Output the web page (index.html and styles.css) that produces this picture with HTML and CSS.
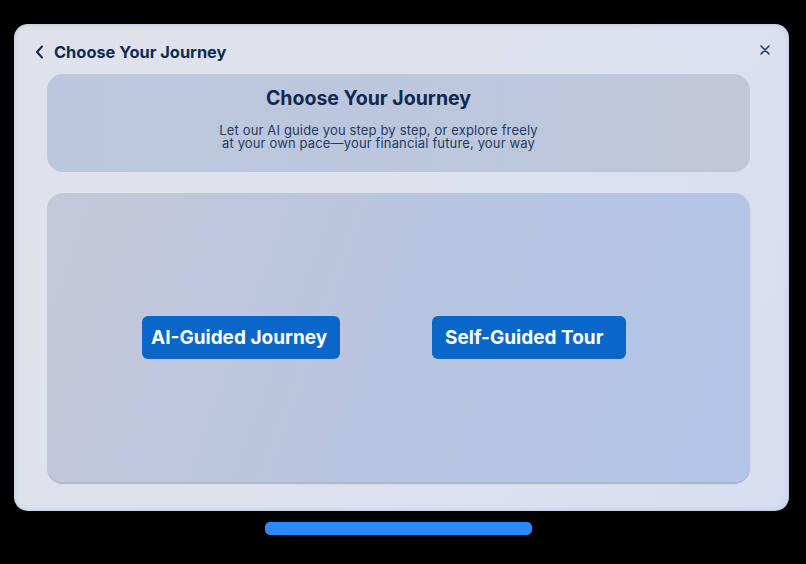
FILE: index.html
```html
<!DOCTYPE html>
<html lang="en">
<head>
<meta charset="utf-8">
<title>Choose Your Journey</title>
<link rel="stylesheet" href="styles.css">
</head>
<body>
<div class="stage">
  <div class="panel">
    <header class="topbar">
      <button class="back" aria-label="Back">
        <svg width="9" height="14" viewBox="0 0 9 14"><path d="M7 1.5 L2 7 L7 12.5" fill="none" stroke="#10294f" stroke-width="2" stroke-linecap="round" stroke-linejoin="round"/></svg>
      </button>
      <h1 class="topbar-title">Choose Your Journey</h1>
      <button class="close" aria-label="Close">
        <svg width="10" height="10" viewBox="0 0 10 10"><path d="M1 1 L9 9 M9 1 L1 9" fill="none" stroke="#1d3356" stroke-width="1.5" stroke-linecap="round"/></svg>
      </button>
    </header>
    <section class="intro">
      <h2 class="intro-title">Choose Your Journey</h2>
      <p class="intro-text">Let our AI guide you step by step, or explore freely<br>at your own pace—your financial future, your way</p>
    </section>
    <section class="choices">
      <button class="choice choice-ai">AI-Guided Journey</button>
      <button class="choice choice-self">Self-Guided Tour</button>
    </section>
  </div>
  <div class="home-bar"></div>
</div>
</body>
</html>
```

FILE: styles.css
```css
* { box-sizing: border-box; }
html, body { margin: 0; padding: 0; background: #000; }
body { font-family: Inter, "Noto Sans", "Liberation Sans", sans-serif; width: 806px; height: 564px; overflow: hidden; }

.stage { padding: 24px 0 0 14px; }

.panel {
  width: 775px;
  height: 487px;
  border-radius: 14px;
  background: linear-gradient(120deg, #dfe2ea 0%, #dde2ee 50%, #d6def1 100%);
  box-shadow: inset 0 0 5px rgba(110, 140, 215, 0.35);
  display: flex;
  flex-direction: column;
  overflow: hidden;
}

.topbar {
  height: 50px;
  padding: 6px 19px 0 21px;
  display: flex;
  align-items: center;
}
.back, .close {
  border: 0; background: none; padding: 0; margin: 0;
  display: flex; align-items: center; cursor: pointer;
}
.back { width: 9px; margin-right: 10px; }
.topbar-title {
  margin: 0;
  font-size: 16.4px;
  font-weight: 700;
  color: #0f2a52;
  flex: 1;
}
.close { width: 10px; margin-top: -5px; }

.intro {
  margin: 0 39px 0 33px;
  height: 98px;
  border-radius: 16px;
  background: linear-gradient(90deg, #bdc7dc 0%, #bcc7de 50%, #c0c8d8 100%);
  padding-top: 12px;
  text-align: center;
}
.intro-title {
  margin: 0 60px 0 0;
  font-size: 19.5px;
  line-height: 25px;
  font-weight: 700;
  color: #0f2a52;
}
.intro-text {
  margin: 12.5px 40px 0 0;
  font-size: 13px;
  letter-spacing: 0.15px;
  line-height: 13.5px;
  color: #233b60;
}

.choices {
  margin: 21px 39px 0 33px;
  height: 289px;
  border-radius: 16px;
  background: linear-gradient(110deg, #c4c9d9 0%, #b9c5df 45%, #b2c4e7 100%);
  box-shadow: 0 2px 1px rgba(90, 100, 130, 0.35);
  display: flex;
  align-items: center;
  padding-left: 95px;
  gap: 92px;
}
.choice {
  height: 43px;
  border: 0;
  border-radius: 6px;
  background: #0a66c9;
  color: #fff;
  font-family: Inter, "Noto Sans", "Liberation Sans", sans-serif;
  font-size: 19px;
  font-weight: 700;
  text-align: left;
  cursor: pointer;
}
.choice-ai { width: 198px; padding: 0 0 0 9px; }
.choice-self { width: 194px; padding: 0 0 0 13px; }

.home-bar {
  margin: 11px 0 0 251px;
  width: 267px;
  height: 13px;
  border-radius: 5px;
  background: #2a8af8;
}
```
